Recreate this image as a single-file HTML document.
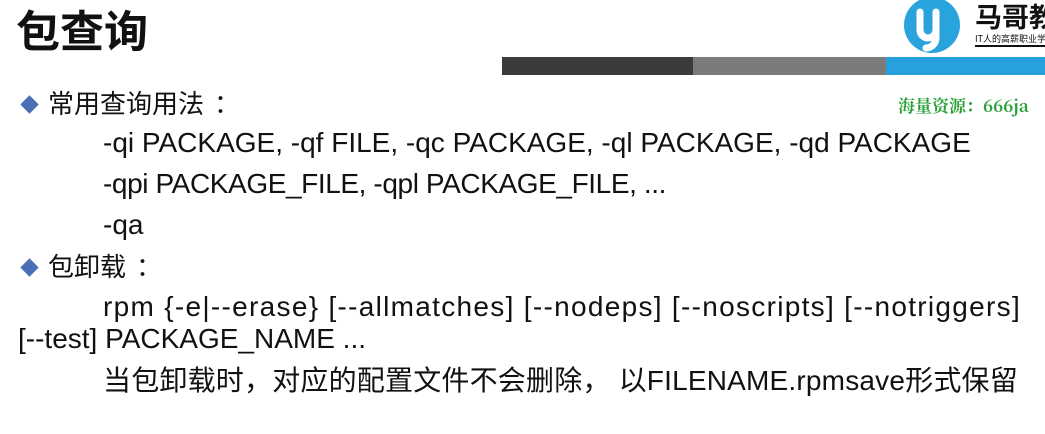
<!DOCTYPE html>
<html><head><meta charset="utf-8"><style>
body{margin:0;width:1045px;height:434px;background:#fff;position:relative;overflow:hidden;font-family:"Liberation Sans","Noto Sans CJK SC",sans-serif;color:#111}
.a{position:absolute;white-space:nowrap}
.t{font-size:28px;line-height:30px}
.c{font-family:"Noto Sans CJK SC",sans-serif;font-size:26px;line-height:30px}
.d{position:absolute;width:13px;height:13px;background:#4a6fb5;transform:rotate(45deg)}
</style></head><body>
<div class="a" style="left:16px;top:2px;font-size:44px;font-weight:bold;font-family:'Noto Sans CJK SC',sans-serif;line-height:52px">包查询</div>
<svg class="a" style="left:900px;top:0" width="64" height="54"><circle cx="32" cy="25" r="28" fill="#29a3dc"/><path d="M20 12 v18 a8 8 0 0 0 16 0 M36 12 v26 a10 10 0 0 1 -10 10" stroke="#fff" stroke-width="7" fill="none" stroke-linecap="round"/></svg>
<div class="a" style="left:975px;top:-4px;font-size:27px;font-weight:bold;font-family:'Noto Sans CJK SC',sans-serif">马哥教育</div>
<div class="a" style="left:975px;top:32px;font-size:9px;font-family:'Noto Sans CJK SC',sans-serif;border-bottom:2px solid #111">IT人的高薪职业学院</div>
<div class="a" style="left:502px;top:57px;width:191px;height:18px;background:#3a3b3a"></div>
<div class="a" style="left:693px;top:57px;width:193px;height:18px;background:#7b7c7a"></div>
<div class="a" style="left:886px;top:57px;width:159px;height:18px;background:#27a0dc"></div>
<div class="a" style="left:898px;top:92px;font-size:17px;color:#2aa138;font-weight:bold;font-family:'Noto Serif CJK SC',serif">海量资源：666ja</div>
<div class="d" style="left:23px;top:98px"></div>
<div class="a c" style="left:48px;top:88px">常用查询用法<span style="margin-left:10px">：</span></div>
<div class="a t" style="left:103px;top:128px">-qi PACKAGE, -qf FILE, -qc PACKAGE, -ql PACKAGE, -qd PACKAGE</div>
<div class="a t" style="left:103px;top:169px;letter-spacing:-0.4px">-qpi PACKAGE_FILE, -qpl PACKAGE_FILE, ...</div>
<div class="a t" style="left:103px;top:210px">-qa</div>
<div class="d" style="left:23px;top:261px"></div>
<div class="a c" style="left:48px;top:251px">包卸载<span style="margin-left:10px">：</span></div>
<div class="a t" style="left:103px;top:292px;letter-spacing:1.3px">rpm {-e|--erase} [--allmatches] [--nodeps] [--noscripts] [--notriggers]</div>
<div class="a t" style="left:18px;top:324px">[--test] PACKAGE_NAME ...</div>
<div class="a t" style="left:103px;top:366px;letter-spacing:0.2px">当包卸载时，对应的配置文件不会删除， 以FILENAME.rpmsave形式保留</div>
</body></html>
